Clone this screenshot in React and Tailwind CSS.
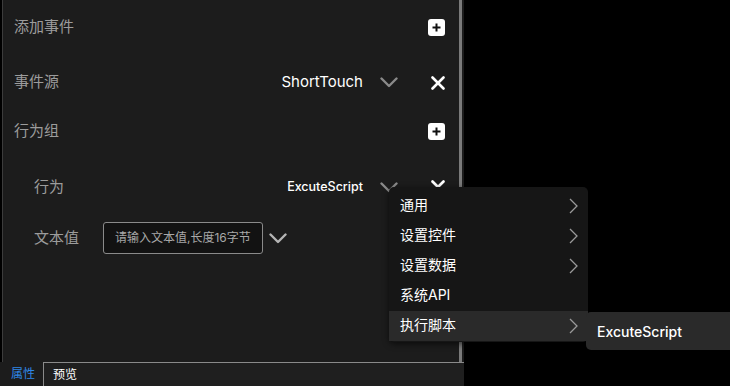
import React from 'react';

const font = { fontFamily: '"Inter", "Noto Sans CJK SC", sans-serif' };

const ChevronDown = ({ className = 'stroke-[#8a8a8a]' }) => (
  <svg width="18" height="11" viewBox="0 0 18 11" fill="none" className={className}>
    <polyline points="1.5,1.5 9,9 16.5,1.5" strokeWidth="2.4" strokeLinecap="round" strokeLinejoin="round" />
  </svg>
);

const CloseIcon = () => (
  <svg width="14" height="14" viewBox="0 0 14 14" fill="none" stroke="white">
    <line x1="1.5" y1="1.5" x2="12.5" y2="12.5" strokeWidth="2.6" strokeLinecap="round" />
    <line x1="12.5" y1="1.5" x2="1.5" y2="12.5" strokeWidth="2.6" strokeLinecap="round" />
  </svg>
);

const PlusButton = () => (
  <div className="w-[17px] h-[17px] bg-white rounded-[3px] flex items-center justify-center">
    <svg width="9" height="9" viewBox="0 0 9 9" stroke="#111">
      <line x1="4.5" y1="0.5" x2="4.5" y2="8.5" strokeWidth="2" />
      <line x1="0.5" y1="4.5" x2="8.5" y2="4.5" strokeWidth="2" />
    </svg>
  </div>
);

const ChevronRight = () => (
  <svg width="9" height="16" viewBox="0 0 9 16" fill="none" stroke="#9a9a9a">
    <polyline points="1,1 8,8 1,15" strokeWidth="1.3" />
  </svg>
);

const menuItems = [
  { label: '通用', sub: true },
  { label: '设置控件', sub: true },
  { label: '设置数据', sub: true },
  { label: '系统API', sub: false },
  { label: '执行脚本', sub: true, active: true },
];

export default function App() {
  return (
    <div className="relative w-[730px] h-[386px] bg-black overflow-hidden" style={font}>
      {/* properties panel */}
      <div className="w-[464px] h-[386px] flex flex-col">
        <div className="flex-1 flex bg-[#1c1c1c] border-l border-l-[#3c3c3c] ml-[2px]">
          <div className="flex-1 flex flex-col">
            <div className="h-[55px] flex items-center pl-[11px] pr-[14px]">
              <span className="text-[15px] text-[#9c9c9c] flex-1">添加事件</span>
              <PlusButton />
            </div>
            <div className="h-[55px] flex items-center pl-[11px] pr-[14px]">
              <span className="text-[15px] text-[#9c9c9c] flex-1">事件源</span>
              <span className="text-[15px] text-white mr-[17px]">ShortTouch</span>
              <ChevronDown />
              <div className="w-[33px]" />
              <CloseIcon />
            </div>
            <div className="h-[42px] flex items-center pl-[11px] pr-[14px]">
              <span className="text-[15px] text-[#9c9c9c] flex-1">行为组</span>
              <PlusButton />
            </div>
            <div className="h-[50px] mt-[10px] flex items-center pl-[31px] pr-[14px]">
              <span className="text-[15px] text-[#9c9c9c] flex-1">行为</span>
              <span className="text-[12.5px] font-medium text-white mr-[17px]">ExcuteScript</span>
              <ChevronDown />
              <div className="w-[33px]" />
              <CloseIcon />
            </div>
            <div className="h-[50px] mt-px flex items-center pl-[31px] pr-[14px]">
              <span className="text-[15px] text-[#9c9c9c] w-[69px]">文本值</span>
              <div className="w-[160px] h-[32px] rounded-[3px] border border-[#8a8a8a] bg-[#121212] flex items-center px-[11px]">
                <span className="text-[12px] text-[#a8a8a8]">请输入文本值,长度16字节</span>
              </div>
              <div className="ml-[6px]">
                <ChevronDown className="stroke-[#b5b5b5]" />
              </div>
            </div>
          </div>
          {/* scrollbar */}
          <div className="w-[3px] bg-[#7a7a7a] mr-[2px]" />
        </div>
        {/* tabs */}
        <div className="h-[24px] flex bg-[#1f1f1f]">
          <div className="w-[43px] bg-[#1c1c1c] flex items-center pl-[11px] text-[12px] text-[#2f86e6]">属性</div>
          <div className="flex-1 border-t border-l border-[#8a8a8a] flex items-center pl-[9px] text-[12px] text-white">预览</div>
        </div>
      </div>

      {/* dropdown menu */}
      <div className="absolute left-[389px] top-[187px] w-[199px] bg-[#161616] rounded-[5px] pt-[4px] pb-[1px] shadow-[0_2px_6px_rgba(0,0,0,0.6)]">
        {menuItems.map((item) => (
          <div
            key={item.label}
            className={`h-[30px] flex items-center justify-between pl-[11px] pr-[10px] ${item.active ? 'bg-[#2a2a2a]' : ''}`}
          >
            <span className="text-[14px] text-white mb-[4px]">{item.label}</span>
            {item.sub && <ChevronRight />}
          </div>
        ))}
      </div>

      {/* submenu */}
      <div className="absolute left-[586px] top-[312px] w-[160px] h-[38px] bg-[#2a2a2a] rounded-[5px] flex items-center pl-[11px]">
        <span className="text-[14px] font-medium text-white">ExcuteScript</span>
      </div>
    </div>
  );
}
